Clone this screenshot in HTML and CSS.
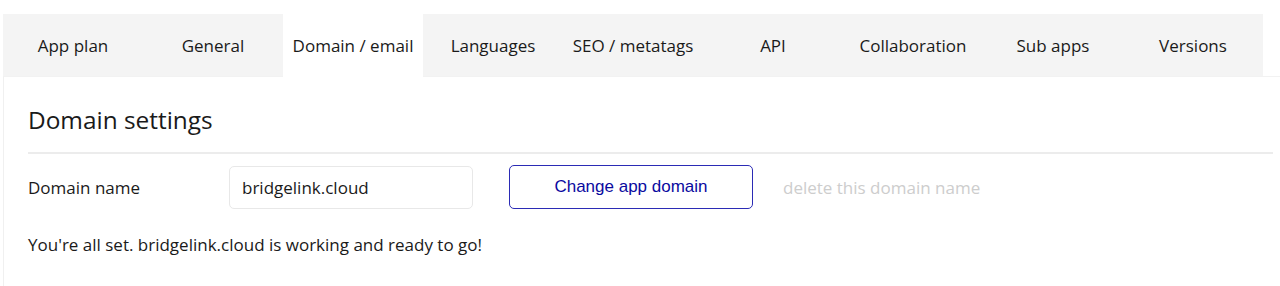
FILE: index.html
```html
<!DOCTYPE html>
<html lang="en">
<head>
    <meta charset="UTF-8">
    <title>App settings - Domain / email</title>
    <link rel="stylesheet" href="styles.css">
</head>
<body>
    <div class="settings">
        <div class="tabs">
            <div class="tab">App plan</div>
            <div class="tab">General</div>
            <div class="tab active">Domain / email</div>
            <div class="tab">Languages</div>
            <div class="tab">SEO / metatags</div>
            <div class="tab">API</div>
            <div class="tab">Collaboration</div>
            <div class="tab">Sub apps</div>
            <div class="tab">Versions</div>
        </div>

        <div class="panel">
            <h2 class="panel-title">Domain settings</h2>
            <div class="row">
                <label class="row-label" for="domain">Domain name</label>
                <input class="text-input" id="domain" type="text" value="bridgelink.cloud">
                <button class="btn-outline">Change app domain</button>
                <span class="link-muted">delete this domain name</span>
            </div>
            <p class="status">You're all set. bridgelink.cloud is working and ready to go!</p>
        </div>
    </div>
</body>
</html>
```

FILE: styles.css
```css
      body {
          margin: 0;
          padding: 14px 0 0 3px;
          font-family: 'Open Sans', sans-serif;
          color: #1a1a1a;
          background: #ffffff;
          overflow: hidden;
      }
      .settings {
          width: 1294px;
      }
      .tabs {
          display: flex;
          width: 1260px;
          height: 63px;
          background: #f4f4f4;
      }
      .tab {
          width: 140px;
          display: flex;
          align-items: center;
          justify-content: center;
          font-size: 17px;
          color: #1a1a1a;
      }
      .tab.active {
          background: #ffffff;
      }
      .panel {
          border-left: 1px solid #f0f0f0;
          border-top: 1px solid #f2f2f2;
          margin-top: -1px;
          padding: 0 24px 0 24px;
          height: 210px;
      }
      .panel-title {
          margin: 0;
          padding: 26px 0 15px;
          font-size: 24.4px;
          font-weight: normal;
          line-height: 34px;
          border-bottom: 2px solid #ececec;
      }
      .row {
          display: flex;
          align-items: center;
          margin-top: 11px;
          height: 44px;
      }
      .row-label {
          width: 201px;
          font-size: 17px;
      }
      .text-input {
          box-sizing: border-box;
          width: 244px;
          height: 43px;
          padding: 0 12px;
          border: 1px solid #e8e8e8;
          border-radius: 5px;
          font-family: 'Open Sans', sans-serif;
          font-size: 17px;
          color: #1a1a1a;
          outline: none;
      }
      .btn-outline {
          box-sizing: border-box;
          margin-left: 36px;
          width: 244px;
          height: 44px;
          background: #ffffff;
          border: 1px solid #2b2bb5;
          border-radius: 5px;
          font-family: 'Liberation Sans', Arial, sans-serif;
          font-size: 17px;
          color: #0a0aa0;
      }
      .link-muted {
          margin-left: 30px;
          font-size: 17px;
          color: #cdcdcd;
      }
      .status {
          margin: 24px 0 0;
          font-size: 17px;
      }
```
